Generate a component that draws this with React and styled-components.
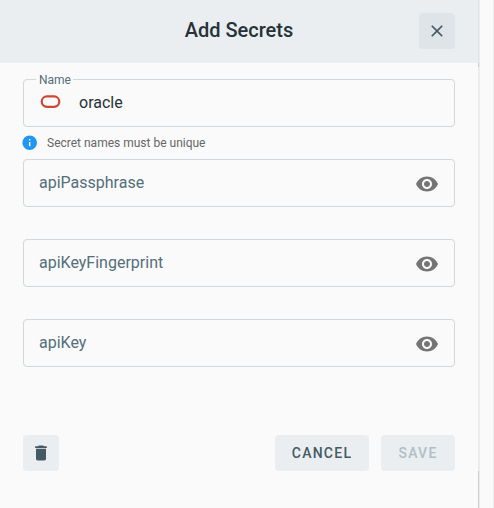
import React from 'react';
import styled, { createGlobalStyle, css } from 'styled-components';

const GlobalStyle = createGlobalStyle`
  *, *::before, *::after { box-sizing: border-box; }
  html, body { margin: 0; padding: 0; background: #fafafa; overflow: hidden; }
  button, input { font: inherit; }
`;

const Page = styled.div`
  display: flex;
  width: 494px;
  height: 508px;
  background: #fafafa;
  font-family: Roboto, sans-serif;
  -webkit-font-smoothing: antialiased;
`;

const Dialog = styled.section`
  display: flex;
  flex-direction: column;
  width: 478px;
`;

const Header = styled.header`
  display: grid;
  grid-template-columns: 36px 1fr 36px;
  align-items: center;
  height: 63px;
  padding: 0 23px 1px;
  background: #eaeef1;
`;

const Title = styled.h1`
  grid-column: 2;
  margin: 0;
  padding-bottom: 2px;
  text-align: center;
  font-size: 20px;
  line-height: 28px;
  font-weight: 500;
  letter-spacing: 0;
  color: #263238;
`;

const IconButton = styled.button`
  display: grid;
  place-items: center;
  width: 36px;
  height: 36px;
  padding: 0;
  border: 0;
  border-radius: 4px;
  background: ${(p) => p.$tone || '#eaeef1'};
  color: #455a64;
`;

const Form = styled.form`
  display: flex;
  flex-direction: column;
  padding: 16px 23px 0;
`;

const Field = styled.div`
  position: relative;
  display: flex;
  align-items: center;
  width: 432px;
  height: 48px;
  margin-bottom: ${(p) => (p.$withHint ? 0 : 32)}px;
  padding: 0 15px;
  border: 1px solid #cfd8dc;
  border-radius: 4px;
`;

const FloatingLabel = styled.label`
  position: absolute;
  top: -8px;
  left: 12px;
  padding: 0 2px 0 3px;
  background: #fafafa;
  font-size: 12px;
  line-height: 16px;
  letter-spacing: 0;
  color: #546e7a;
`;

const FieldText = styled.span`
  flex: 1;
  font-size: 16px;
  line-height: 24px;
  ${(p) =>
    p.$filled
      ? css`
          margin-left: 18px;
          color: #263238;
        `
      : css`
          color: #546e7a;
        `}
`;

const Reveal = styled.button`
  display: flex;
  margin-top: 1px;
  padding: 0;
  border: 0;
  background: none;
  color: #757575;
`;

const Hint = styled.p`
  display: flex;
  align-items: center;
  gap: 8px;
  height: 32px;
  margin: 0 0 0 -2px;
  font-size: 12px;
  line-height: 16px;
  letter-spacing: 0;
  color: #666;
`;

const Actions = styled.footer`
  display: flex;
  gap: 12px;
  margin-top: 36px;
`;

const TextButton = styled.button`
  width: ${(p) => p.$width}px;
  height: 36px;
  padding: 0;
  border: 0;
  border-radius: 4px;
  background: #eaeef1;
  font-size: 14px;
  font-weight: 500;
  letter-spacing: 1.25px;
  color: ${(p) => (p.disabled ? '#b0bec5' : '#455a64')};
`;

const ButtonGroup = styled.div`
  display: flex;
  gap: 12px;
  margin-left: auto;
`;

const Track = styled.aside`
  display: flex;
  flex-direction: column;
  width: 16px;
  border-right: 1px solid #ebebeb;
`;

const TrackEdge = styled.div`
  height: ${(p) => p.$height}px;
  border-left: 1px solid ${(p) => p.$color};
  box-shadow: inset 1px 0 #ededee;
`;

const Svg = ({ size, d }) => (
  <svg width={size} height={size} viewBox="0 0 24 24" fill="currentColor" aria-hidden="true">
    <path d={d} />
  </svg>
);

const icons = {
  close: 'M19 6.41 17.59 5 12 10.59 6.41 5 5 6.41 10.59 12 5 17.59 6.41 19 12 13.41 17.59 19 19 17.59 13.41 12z',
  trash: 'M6 19c0 1.1.9 2 2 2h8c1.1 0 2-.9 2-2V7H6v12zM19 4h-3.5l-1-1h-5l-1 1H5v2h14V4z',
  eye: 'M12 4.5C7 4.5 2.73 7.61 1 12c1.73 4.39 6 7.5 11 7.5s9.27-3.11 11-7.5c-1.73-4.39-6-7.5-11-7.5zM12 17c-2.76 0-5-2.24-5-5s2.24-5 5-5 5 2.24 5 5-2.24 5-5 5zm0-8c-1.66 0-3 1.34-3 3s1.34 3 3 3 3-1.34 3-3-1.34-3-3-3z',
  info: 'M12 2C6.48 2 2 6.48 2 12s4.48 10 10 10 10-4.48 10-10S17.52 2 12 2zm1 15h-2v-6h2v6zm0-8h-2V7h2v2z',
};

const InfoMark = styled.span`
  display: flex;
  width: 18px;
  height: 18px;
  color: #2196f3;
`;

const OracleMark = () => (
  <svg width="22" height="16" viewBox="0 0 22 16" fill="none" aria-hidden="true">
    <rect x="2.7" y="1.4" width="17.6" height="10.4" rx="5.2" stroke="#d04635" strokeWidth="2.2" />
  </svg>
);

const secrets = ['apiPassphrase', 'apiKeyFingerprint', 'apiKey'];

export default function App() {
  return (
    <>
      <GlobalStyle />
      <Page>
        <Dialog>
          <Header>
            <Title>Add Secrets</Title>
            <IconButton $tone="#dfe4e8" aria-label="Close">
              <Svg size={20} d={icons.close} />
            </IconButton>
          </Header>
          <Form onSubmit={(e) => e.preventDefault()}>
            <Field $withHint>
              <FloatingLabel>Name</FloatingLabel>
              <OracleMark />
              <FieldText $filled>oracle</FieldText>
            </Field>
            <Hint>
              <InfoMark>
                <Svg size={17.4} d={icons.info} />
              </InfoMark>
              Secret names must be unique
            </Hint>
            {secrets.map((name) => (
              <Field key={name}>
                <FieldText>{name}</FieldText>
                <Reveal type="button" aria-label={`Show ${name}`}>
                  <Svg size={24} d={icons.eye} />
                </Reveal>
              </Field>
            ))}
            <Actions>
              <IconButton type="button" aria-label="Delete">
                <Svg size={20} d={icons.trash} />
              </IconButton>
              <ButtonGroup>
                <TextButton type="button" $width={94}>CANCEL</TextButton>
                <TextButton type="submit" $width={74} disabled>SAVE</TextButton>
              </ButtonGroup>
            </Actions>
          </Form>
        </Dialog>
        <Track>
          <TrackEdge $height={63} $color="#e0e3e5" />
          <TrackEdge $height={4} $color="#cccccc" />
          <TrackEdge $height={404} $color="#ebebec" />
          <TrackEdge $height={37} $color="#cccccc" />
        </Track>
      </Page>
    </>
  );
}
